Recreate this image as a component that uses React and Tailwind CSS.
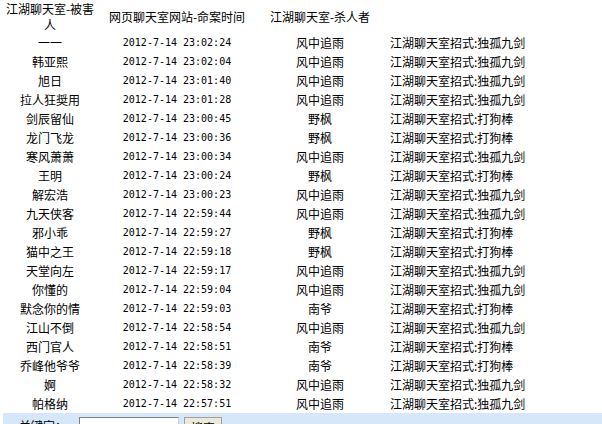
const rows = [
  ["一一", "2012-7-14 23:02:24", "风中追雨", "江湖聊天室招式:独孤九剑"],
  ["韩亚熙", "2012-7-14 23:02:04", "风中追雨", "江湖聊天室招式:独孤九剑"],
  ["旭日", "2012-7-14 23:01:40", "风中追雨", "江湖聊天室招式:独孤九剑"],
  ["拉人狂奨用", "2012-7-14 23:01:28", "风中追雨", "江湖聊天室招式:独孤九剑"],
  ["剑辰留仙", "2012-7-14 23:00:45", "野枫", "江湖聊天室招式:打狗棒"],
  ["龙门飞龙", "2012-7-14 23:00:36", "野枫", "江湖聊天室招式:打狗棒"],
  ["寒风萧萧", "2012-7-14 23:00:34", "风中追雨", "江湖聊天室招式:独孤九剑"],
  ["王明", "2012-7-14 23:00:24", "野枫", "江湖聊天室招式:打狗棒"],
  ["解宏浩", "2012-7-14 23:00:23", "风中追雨", "江湖聊天室招式:独孤九剑"],
  ["九天侠客", "2012-7-14 22:59:44", "风中追雨", "江湖聊天室招式:独孤九剑"],
  ["邪小乖", "2012-7-14 22:59:27", "野枫", "江湖聊天室招式:打狗棒"],
  ["猫中之王", "2012-7-14 22:59:18", "野枫", "江湖聊天室招式:打狗棒"],
  ["天堂向左", "2012-7-14 22:59:17", "风中追雨", "江湖聊天室招式:独孤九剑"],
  ["你懂的", "2012-7-14 22:59:04", "风中追雨", "江湖聊天室招式:独孤九剑"],
  ["默念你的情", "2012-7-14 22:59:03", "南爷", "江湖聊天室招式:打狗棒"],
  ["江山不倒", "2012-7-14 22:58:54", "风中追雨", "江湖聊天室招式:独孤九剑"],
  ["西门官人", "2012-7-14 22:58:51", "南爷", "江湖聊天室招式:打狗棒"],
  ["乔峰他爷爷", "2012-7-14 22:58:39", "南爷", "江湖聊天室招式:打狗棒"],
  ["婀", "2012-7-14 22:58:32", "风中追雨", "江湖聊天室招式:独孤九剑"],
  ["帕格纳", "2012-7-14 22:57:51", "风中追雨", "江湖聊天室招式:独孤九剑"],
];

export default function App() {
  return (
    <div
      className="w-[602px] h-[424px] overflow-hidden bg-white text-black text-[12px]"
      style={{ fontFamily: '"SimSun", "Noto Sans CJK SC", sans-serif' }}
    >
      {/* Header */}
      <div className="flex items-center h-[33px]">
        <div className="w-[100px] px-[2px] text-center leading-[16px]">
          江湖聊天室-被害人
        </div>
        <div className="w-[154px] text-center leading-[16px]">
          网页聊天室网站-命案时间
        </div>
        <div className="w-[132px] text-center leading-[16px]">
          江湖聊天室-杀人者
        </div>
        <div className="flex-1" />
      </div>

      {/* Rows */}
      {rows.map((r, i) => (
        <div key={i} className="flex items-center h-[19px] leading-[19px]">
          <div className="w-[100px] text-center">{r[0]}</div>
          <div className="w-[154px] text-center font-['DejaVu_Sans_Mono',monospace] text-[10px] whitespace-pre">
            {r[1]}
          </div>
          <div className="w-[132px] text-center">{r[2]}</div>
          <div className="flex-1 pl-[4px]">{r[3]}</div>
        </div>
      ))}

      {/* Search bar */}
      <div className="ml-[3px] h-[30px] bg-[#d5e7f9] flex items-start pt-[4px]">
        <span className="ml-[16px] w-[60px] leading-[18px]">关键字：</span>
        <input
          type="text"
          className="w-[100px] h-[20px] bg-white border border-t-[#808080] border-l-[#808080] border-b-[#d4d0c8] border-r-[#d4d0c8] outline-none"
        />
        <button className="ml-[5px] h-[22px] px-[6px] bg-[#ece9d8] border border-[#a0a0a0] leading-[18px] text-[12px]">
          搜索
        </button>
      </div>
    </div>
  );
}
